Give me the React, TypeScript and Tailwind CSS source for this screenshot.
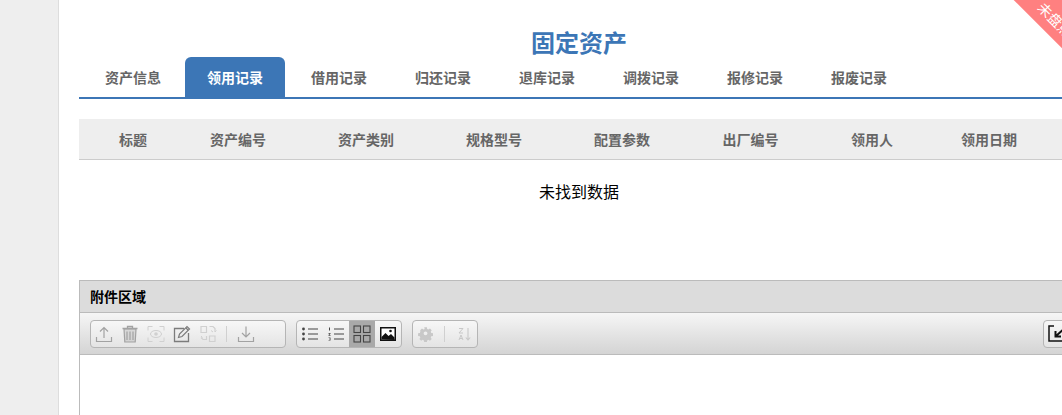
const cjk = "font-['Microsoft_YaHei','Noto_Sans_CJK_SC',sans-serif]";

const tabs = ["资产信息", "领用记录", "借用记录", "归还记录", "退库记录", "调拨记录", "报修记录", "报废记录"];

const columns = [
  { label: "标题", cls: "w-[95px] pl-[13px]" },
  { label: "资产编号", cls: "w-[128px]" },
  { label: "资产类别", cls: "w-[128px]" },
  { label: "规格型号", cls: "w-[128px]" },
  { label: "配置参数", cls: "w-[128px]" },
  { label: "出厂编号", cls: "w-[129px]" },
  { label: "领用人", cls: "w-[114px]" },
  { label: "领用日期", cls: "w-[120px]" },
];

function Icon({ children, tone = "mid" }: { children: React.ReactNode; tone?: "dim" | "mid" | "dark" }) {
  const color = tone === "dim" ? "text-[#d0d0d0]" : tone === "dark" ? "text-[#7c7c7c]" : "text-[#a2a2a2]";
  return (
    <svg width="20" height="20" viewBox="0 0 20 20" fill="none" stroke="currentColor" className={color}>
      {children}
    </svg>
  );
}

function ToolBtn({ children, active = false }: { children: React.ReactNode; active?: boolean }) {
  return (
    <span className={`flex h-full w-[26px] items-center justify-center ${active ? "bg-[#a9a9a9]" : ""}`}>{children}</span>
  );
}

function Sep() {
  return <span className="ml-[5px] mr-[6px] h-[16px] w-px bg-[#d0d0d0]" />;
}

function Group({ children, className = "" }: { children: React.ReactNode; className?: string }) {
  return (
    <div className={`flex h-[28px] items-center overflow-hidden rounded-[4px] border border-[#b5b5b5] bg-gradient-to-b from-[#f7f7f7] to-[#e4e4e4] ${className}`}>
      {children}
    </div>
  );
}

export default function App() {
  return (
    <div className={`relative flex h-[415px] w-[1062px] overflow-hidden bg-white ${cjk}`}>
      {/* left rail */}
      <div className="h-full w-[59px] shrink-0 border-r border-[#dddddd] bg-[#eeeeee]" />

      <main className="w-[1100px] shrink-0 pl-[20px]">
        <h1 className="h-[57px] w-[1000px] pt-[26px] text-center text-[24px] font-bold leading-[32px] text-[#3c76b6]">固定资产</h1>

        {/* tabs */}
        <div className="flex h-[42px] border-b-2 border-[#3c76b6] pl-[4px]">
          {tabs.map((t, i) => (
            <div
              key={t}
              className={`flex h-[40px] w-[100px] items-center justify-center rounded-t-[6px] text-[14px] font-bold ${
                i === 1 ? "ml-[2px] mr-[4px] bg-[#3c76b6] text-white" : "mr-[4px] text-[#666666]"
              } ${i === 0 ? "!mr-0" : ""}`}
            >
              {t}
            </div>
          ))}
        </div>

        {/* table */}
        <div className="mt-[20px] flex h-[41px] items-center border-b border-[#cccccc] bg-[#eeeeee] text-[14px] font-bold text-[#666666]">
          {columns.map((c) => (
            <div key={c.label} className={`shrink-0 text-center ${c.cls}`}>
              {c.label}
            </div>
          ))}
        </div>
        <div className="flex h-[61px] w-[1000px] items-center justify-center text-[16px] text-black">未找到数据</div>

        {/* attachments */}
        <section className="mt-[59px] border border-[#bbbbbb] bg-white">
          <div className="flex h-[32px] items-center border-b border-[#bbbbbb] bg-[#dcdcdc] pl-[10px] text-[14px] font-bold text-black">附件区域</div>
          <div className="flex h-[42px] items-center gap-[10px] border-b border-[#bbbbbb] bg-gradient-to-b from-[#f6f6f6] to-[#d4d4d4] pl-[10px]">
            <Group className="w-[196px]">
              <ToolBtn>
                <Icon>
                  <path d="M10 14V3.500M6 7.500 10 3.500l4 4M2.500 13v4.500h15V13" strokeWidth="1.200" />
                </Icon>
              </ToolBtn>
              <ToolBtn>
                <Icon>
                  <path d="M2.500 4.500h15M7.500 4V2.500h5V4" strokeWidth="1.300" />
                  <path d="M4 5h12l-.8 13H4.800z" fill="currentColor" fillOpacity="0.3" strokeWidth="1.200" />
                  <path d="M7 7.500v8.500M10 7.500v8.500M13 7.500v8.500" strokeWidth="1.200" />
                </Icon>
              </ToolBtn>
              <ToolBtn>
                <Icon tone="dim">
                  <path d="M2 6.500V2.500h4.500M13.500 2.500H18v4M2 13.500v4h4.500M13.500 17.500H18v-4" strokeWidth="1" />
                  <ellipse cx="10" cy="10" rx="5.500" ry="3.500" strokeWidth="1" />
                  <circle cx="10" cy="10" r="1.800" fill="currentColor" stroke="none" />
                </Icon>
              </ToolBtn>
              <ToolBtn>
                <Icon tone="dark">
                  <path d="M12 4.500H2.500v13h14V9" strokeWidth="1.300" />
                  <path d="m6.500 13.500 1-3.500L15 2.500l2.500 2.500L10 12.500z" strokeWidth="1.200" />
                  <path d="m14 4 2 2" strokeWidth="1.200" />
                </Icon>
              </ToolBtn>
              <ToolBtn>
                <Icon tone="dim">
                  <path d="M3 8.500V2.500h5.500v6zM11.500 2.500H15l2 2v3.500M11.500 17.500H17v-5.500h-5.500zM8.500 12v3.500H5L3 13.500" strokeWidth="1.200" />
                  <path d="m15 8-2-1.500M17 8l1.500-1.500M3 12l1.500 1.500" strokeWidth="1" />
                </Icon>
              </ToolBtn>
              <Sep />
              <ToolBtn>
                <Icon>
                  <path d="M10 2.500V13M6 9l4 4 4-4M2.500 13v4.500h15V13" strokeWidth="1.200" />
                </Icon>
              </ToolBtn>
            </Group>

            <Group className="w-[106px]">
              <ToolBtn>
                <svg width="18" height="14" viewBox="0 0 18 14" className="text-[#444444]" fill="currentColor">
                  <circle cx="2.500" cy="2" r="1.400" />
                  <circle cx="2.500" cy="7" r="1.400" />
                  <circle cx="2.500" cy="12" r="1.400" />
                  <path d="M7 1.500h10v1H7zM7 6.500h10v1H7zM7 11.500h10v1H7z" />
                </svg>
              </ToolBtn>
              <ToolBtn>
                <svg width="18" height="14" viewBox="0 0 18 14" className="text-[#444444]" fill="currentColor">
                  <path d="M2 .5h1v3H2zM1.500 6h2v.7L2.400 8H3.500v.7h-2V8l1.200-1.300H1.500zM1.500 10.500h2v3h-2v-.6h1.300v-.6H2v-.6h.8v-.6H1.500z" />
                  <path d="M7 1.500h10v1H7zM7 6.500h10v1H7zM7 11.500h10v1H7z" />
                </svg>
              </ToolBtn>
              <ToolBtn active>
                <svg width="18" height="18" viewBox="0 0 18 18" fill="none" stroke="#444444" strokeWidth="1.100">
                  <rect x="1" y="1" width="6.500" height="6.500" />
                  <rect x="10.500" y="1" width="6.500" height="6.500" />
                  <rect x="1" y="10.500" width="6.500" height="6.500" />
                  <rect x="10.500" y="10.500" width="6.500" height="6.500" />
                </svg>
              </ToolBtn>
              <ToolBtn>
                <svg width="16" height="14" viewBox="0 0 16 14">
                  <rect x=".75" y=".75" width="14.500" height="12.500" fill="#ffffff" stroke="#111111" strokeWidth="1.500" />
                  <path d="M1.500 12.500V10l4-4 3 3 2.500-2 3.500 3.500v2.500z" fill="#111111" />
                  <circle cx="10.500" cy="4" r="1.300" fill="#111111" />
                </svg>
              </ToolBtn>
            </Group>

            <Group className="w-[66px]">
              <ToolBtn>
                <svg width="16" height="16" viewBox="0 0 16 16" fill="#c8c8c8">
                  <path fillRule="evenodd" d="M6.500 1h3l.4 2 1.300.6 1.800-1.100 2 2-1.100 1.800.6 1.300 2 .4v3l-2 .4-.6 1.300 1.100 1.800-2 2-1.800-1.100-1.300.6-.4 2h-3l-.4-2-1.300-.6-1.800 1.100-2-2 1.100-1.800-.6-1.300-2-.4v-3l2-.4.6-1.300L1.900 4.500l2-2 1.800 1.100L7 3z M8 5.800a2.200 2.200 0 1 0 0 4.400 2.200 2.200 0 0 0 0-4.400z" transform="translate(.5 .3) scale(.88)" />
                </svg>
              </ToolBtn>
              <Sep />
              <ToolBtn>
                <svg width="16" height="16" viewBox="0 0 16 16" fill="none" stroke="#c8c8c8">
                  <path d="M3 2.500h4L3 7h4M3 14l2-5 2 5M3.700 12.500h2.600" strokeWidth="1" />
                  <path d="M12 2v12M9.800 11.500 12 14l2.200-2.500" strokeWidth="1.100" />
                </svg>
              </ToolBtn>
            </Group>

            <Group className="ml-[555px] w-[40px] pl-[4px]">
              <svg width="20" height="18" viewBox="0 0 20 18" fill="none" stroke="#111111" strokeWidth="1.500">
                <path d="M6 1H1v15h18" />
                <path d="M18 2 8 11M7.500 6v5.500H13" strokeWidth="2" />
              </svg>
            </Group>
          </div>
          <div className="h-[80px]" />
        </section>
      </main>

      {/* corner ribbon */}
      <div className="absolute right-[-70px] top-[-12px] flex h-[50px] w-[140px] rotate-45 items-end justify-center bg-[#ff8080] pb-[6px] text-[14px] leading-[20px] text-white">
        未盘点
      </div>
    </div>
  );
}
